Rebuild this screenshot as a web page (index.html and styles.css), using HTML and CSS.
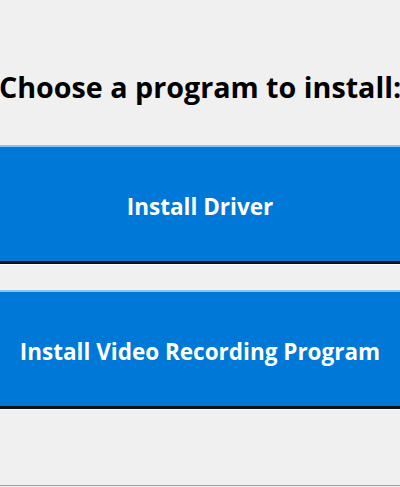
FILE: index.html
```
<!DOCTYPE html>
<html>
<head>
<meta charset="utf-8">
<link rel="stylesheet" href="styles.css">
</head>
<body>
<main class="app">
  <h1 class="title">Choose a program to install:</h1>
  <div class="actions">
    <button class="btn">Install Driver</button>
    <button class="btn">Install Video Recording Program</button>
  </div>
</main>
</body>
</html>
```
FILE: styles.css
```
html, body {
  margin: 0;
  padding: 0;
  background: #f0f0f0;
  height: 100%;
}
.app {
  height: 486px;
  border-bottom: 1px solid #a0a0a0;
  box-sizing: border-box;
  padding-top: 68px;
  overflow: hidden;
  font-family: "Open Sans", "Noto Sans", sans-serif;
}
.title {
  margin: 0;
  font-size: 28.7px;
  font-weight: 700;
  line-height: 38px;
  color: #000;
  text-align: center;
  white-space: nowrap;
  display: flex;
  justify-content: center;
}
.actions {
  margin-top: 39px;
  display: flex;
  flex-direction: column;
  gap: 26px;
}
.btn {
  display: block;
  width: 100%;
  height: 119px;
  margin: 0;
  padding: 4px 0 0;
  background: #0078d7;
  color: #fff;
  font-family: "Open Sans", "Noto Sans", sans-serif;
  font-size: 22.5px;
  font-weight: 700;
  border: none;
  border-top: 2px solid #8cc2f0;
  border-bottom: 3px solid #111;
  box-shadow: 0 1px 0 #ffffff;
}
```
